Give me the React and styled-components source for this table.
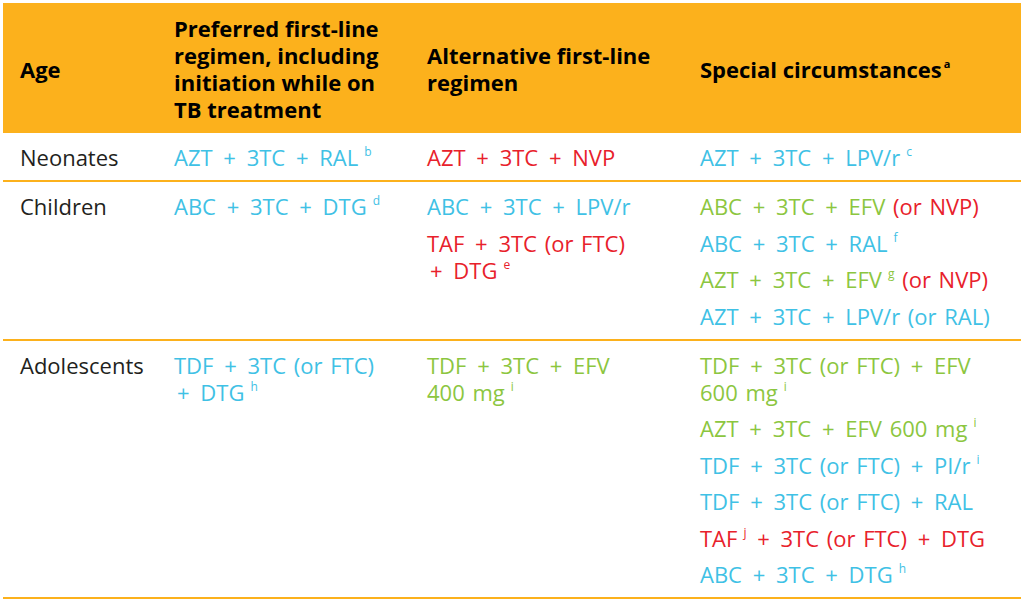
import React from "react";
import styled, { createGlobalStyle } from "styled-components";

const GlobalStyle = createGlobalStyle`
  html, body {
    margin: 0;
    padding: 0;
    background: #ffffff;
  }
  body {
    font-family: "Open Sans", "Noto Sans", "Liberation Sans", sans-serif;
  }
`;

const COLORS = {
  blue: "#3fc1e5",
  red: "#e8212b",
  green: "#8cc63f",
  orange: "#fcb11c",
  text: "#231f20",
};

const Page = styled.div`
  padding: 3px 3px 0 3px;
`;

const Table = styled.table`
  width: 1018px;
  border-collapse: collapse;
  table-layout: fixed;
`;

const HeadRow = styled.tr`
  background: ${COLORS.orange};
  height: 130px;
`;

const HeadCell = styled.th`
  text-align: left;
  vertical-align: middle;
  padding: 2px 10px 0 17px;
  font-size: 22px;
  line-height: 27px;
  font-weight: 700;
  color: #000;
`;

const Row = styled.tr`
  border-bottom: 2px solid ${COLORS.orange};
`;

const Cell = styled.td`
  vertical-align: top;
  padding: 11px 6px 9px 17px;
  font-size: 22px;
  line-height: 27px;
  font-weight: 400;
  color: ${COLORS.text};
`;

const Item = styled.div`
  color: ${(p) => COLORS[p.tone] || COLORS.text};
  word-spacing: 2px;
  white-space: nowrap;
  & + & {
    margin-top: 9.5px;
  }
`;

const Plus = styled.span`
  padding: 0 3px;
`;

const Tone = styled.span`
  color: ${(p) => COLORS[p.tone]};
`;

const Sup = styled.sup`
  font-size: 12px;
  line-height: 0;
  vertical-align: 10px;
  margin-left: 6px;
  font-weight: ${(p) => (p.bold ? 700 : 400)};
  ${(p) => p.tight && "margin-left: 2px; font-size: 11px;"}
`;

const rows = [
  {
    age: "Neonates",
    preferred: [{ tone: "blue", text: "AZT + 3TC + RAL", sup: "b" }],
    alternative: [{ tone: "red", text: "AZT + 3TC + NVP" }],
    special: [{ tone: "blue", text: "AZT + 3TC + LPV/r", sup: "c" }],
  },
  {
    age: "Children",
    preferred: [{ tone: "blue", text: "ABC + 3TC + DTG", sup: "d" }],
    alternative: [
      { tone: "blue", text: "ABC + 3TC + LPV/r" },
      { tone: "red", text: "TAF + 3TC (or FTC)", line2: "+ DTG", sup: "e" },
    ],
    special: [
      { tone: "green", text: "ABC + 3TC + EFV", tail: { tone: "red", text: " (or NVP)" } },
      { tone: "blue", text: "ABC + 3TC + RAL", sup: "f" },
      { tone: "green", text: "AZT + 3TC + EFV", sup: "g", tail: { tone: "red", text: " (or NVP)" } },
      { tone: "blue", text: "AZT + 3TC + LPV/r (or RAL)" },
    ],
  },
  {
    age: "Adolescents",
    preferred: [{ tone: "blue", text: "TDF + 3TC (or FTC)", line2: "+ DTG", sup: "h" }],
    alternative: [{ tone: "green", text: "TDF + 3TC + EFV", line2: "400 mg", sup: "i" }],
    special: [
      { tone: "green", text: "TDF + 3TC (or FTC) + EFV", line2: "600 mg", sup: "i" },
      { tone: "green", text: "AZT + 3TC + EFV 600 mg", sup: "i" },
      { tone: "blue", text: "TDF + 3TC (or FTC) + PI/r", sup: "i" },
      { tone: "blue", text: "TDF + 3TC (or FTC) + RAL" },
      { tone: "red", text: "TAF", sup: "j", rest: " + 3TC (or FTC) + DTG" },
      { tone: "blue", text: "ABC + 3TC + DTG", sup: "h" },
    ],
  },
];

// put each "+" in its own span so it gets the wider sidebearings of the original font
const withPlus = (str) =>
  str.split("+").map((part, i) => (
    <React.Fragment key={i}>
      {i > 0 && <Plus>+</Plus>}
      {part}
    </React.Fragment>
  ));

const Regimen = ({ item }) => (
  <Item tone={item.tone}>
    {withPlus(item.text)}
    {item.line2 ? (
      <>
        <br />
        {withPlus(item.line2)}
      </>
    ) : null}
    {item.sup && <Sup>{item.sup}</Sup>}
    {item.rest && withPlus(item.rest)}
    {item.tail && <Tone tone={item.tail.tone}>{item.tail.text}</Tone>}
  </Item>
);

export default function App() {
  return (
    <Page>
      <GlobalStyle />
      <Table>
        <colgroup>
          <col style={{ width: 154 }} />
          <col style={{ width: 253 }} />
          <col style={{ width: 273 }} />
          <col style={{ width: 338 }} />
        </colgroup>
        <thead>
          <HeadRow>
            <HeadCell>Age</HeadCell>
            <HeadCell>Preferred first-line regimen, including initiation while on TB treatment</HeadCell>
            <HeadCell>Alternative first-line regimen</HeadCell>
            <HeadCell>
              Special circumstances<Sup bold tight>a</Sup>
            </HeadCell>
          </HeadRow>
        </thead>
        <tbody>
          {rows.map((r) => (
            <Row key={r.age}>
              <Cell>{r.age}</Cell>
              <Cell>
                {r.preferred.map((it, i) => (
                  <Regimen key={i} item={it} />
                ))}
              </Cell>
              <Cell>
                {r.alternative.map((it, i) => (
                  <Regimen key={i} item={it} />
                ))}
              </Cell>
              <Cell>
                {r.special.map((it, i) => (
                  <Regimen key={i} item={it} />
                ))}
              </Cell>
            </Row>
          ))}
        </tbody>
      </Table>
    </Page>
  );
}
